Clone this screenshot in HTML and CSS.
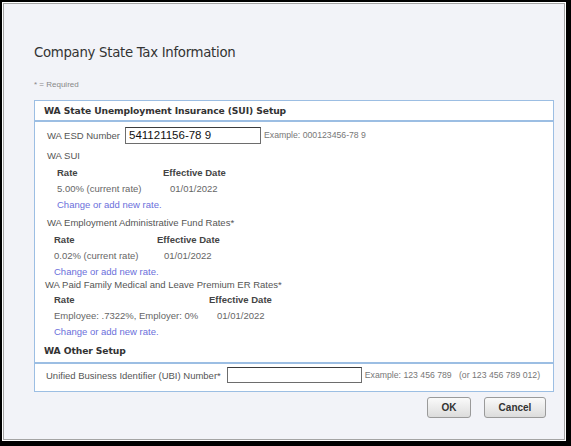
FILE: index.html
```html
<!DOCTYPE html>
<html lang="en">
<head>
  <meta charset="UTF-8">
  <title>Company State Tax Information</title>
  <link rel="stylesheet" href="styles.css">
</head>
<body>
  <div class="frame">
    <div class="dialog">
      <h2 class="title">Company State Tax Information</h2>
      <div class="req">* = Required</div>

      <div class="panel">
        <div class="panel-head">WA State Unemployment Insurance (SUI) Setup</div>
        <div class="panel-body">
          <div class="field-row">
            <label class="lbl">WA ESD Number</label>
            <input class="txt esd" type="text" value="541121156-78 9">
            <span class="example">Example: 000123456-78 9</span>
          </div>

          <div class="line">WA SUI</div>
          <div class="rates r1">
            <div class="rrow head"><span class="c1">Rate</span><span>Effective Date</span></div>
            <div class="rrow"><span class="c1 v">5.00% (current rate)</span><span class="v">01/01/2022</span></div>
            <div class="rrow"><a class="link" href="#">Change or add new rate.</a></div>
          </div>

          <div class="line">WA Employment Administrative Fund Rates*</div>
          <div class="rates r2">
            <div class="rrow head"><span class="c1">Rate</span><span>Effective Date</span></div>
            <div class="rrow"><span class="c1 v">0.02% (current rate)</span><span class="v">01/01/2022</span></div>
            <div class="rrow"><a class="link" href="#">Change or add new rate.</a></div>
          </div>

          <div class="line tight">WA Paid Family Medical and Leave Premium ER Rates*</div>
          <div class="rates r3">
            <div class="rrow head"><span class="c1">Rate</span><span>Effective Date</span></div>
            <div class="rrow"><span class="c1 v">Employee: .7322%, Employer: 0%</span><span class="v">01/01/2022</span></div>
            <div class="rrow last"><a class="link" href="#">Change or add new rate.</a></div>
          </div>
        </div>
        <div class="panel-head sub">WA Other Setup</div>
        <div class="field-row ubi">
          <label class="lbl">Unified Business Identifier (UBI) Number*</label>
          <input class="txt ubi-in" type="text" value="">
          <span class="example">Example: 123 456 789 &nbsp; (or 123 456 789 012)</span>
        </div>
      </div>

      <div class="actions">
        <button class="btn ok">OK</button>
        <button class="btn cancel">Cancel</button>
      </div>
    </div>
  </div>
</body>
</html>
```

FILE: styles.css
```css
html, body { margin: 0; padding: 0; }
body { width: 571px; height: 446px; background: #000; font-family: "Liberation Sans", Arial, sans-serif; font-size: 9.5px; color: #555; }
.frame { box-sizing: border-box; width: 571px; height: 446px; border-style: solid; border-color: #000; border-width: 2px 5px 5px 2px; }
.dialog { box-sizing: border-box; height: 100%; border: 1px solid #fff; box-shadow: inset 0 0 0 1px #a4a4a4; background: #f2f3f8; padding: 40px 11px 0 31px; }
.title { margin: 0; font-family: "DejaVu Sans", Verdana, sans-serif; font-weight: normal; font-size: 13.3px; line-height: 20px; color: #333; letter-spacing: -0.3px; }
.req { margin-top: 16px; line-height: 12px; font-size: 8px; color: #888; }
.panel { margin-top: 9px; border: 1px solid #9cbee3; background: #fff; }
.panel-head { font-family: "DejaVu Sans", Verdana, sans-serif; font-weight: bold; font-size: 9.2px; line-height: 19px; padding-left: 9px; color: #333; border-bottom: 2px solid #9cbee3; letter-spacing: -0.1px; }
.panel-head.sub { line-height: 22px; }
.panel-body { padding: 2px 0 1px 12px; }
.field-row { display: flex; align-items: center; height: 22px; }
.lbl { margin-right: 5px; }
.txt { box-sizing: border-box; height: 17px; border: 1px solid #6d6d6d; border-top-color: #3c3c3c; background: #fff; padding: 0 3px; font-family: "Liberation Sans", Arial, sans-serif; font-size: 11.5px; color: #111; }
.esd { width: 136px; }
.example { margin-left: 3px; font-size: 8.7px; color: #777; }
.line { line-height: 17px; margin-top: 1px; }
.line.tight { line-height: 14px; margin-top: -2px; margin-left: -2px; }
.rates { padding-left: 10px; }
.rates.r2, .rates.r3 { padding-left: 7px; }
.rrow { display: flex; line-height: 16px; }
.rrow.head { font-weight: bold; color: #444; line-height: 17px; }
.r3 .rrow.head { line-height: 16px; }
.r3 .rrow.last { line-height: 15px; }
.r1 .c1 { width: 106px; }
.r2 .c1 { width: 103px; }
.r3 .c1 { width: 155px; }
.rrow .v { color: #666; }
.r1 .rrow .v + .v { padding-left: 7px; }
.r2 .rrow .v + .v { padding-left: 7px; }
.r3 .rrow .v + .v { padding-left: 8px; }
.link { color: #6b6fdb; text-decoration: none; }
.field-row.ubi { height: 22px; padding: 0 0 5px 11px; }
.ubi-in { width: 135px; height: 16px; margin-left: 1px; }
.actions { display: flex; justify-content: flex-end; gap: 13px; margin-top: 5px; padding-right: 8px; }
.btn { height: 21px; border: 1px solid #9a9a9a; border-radius: 3px; background: linear-gradient(#fafafa, #dcdcdc); font-family: "Liberation Sans", Arial, sans-serif; font-weight: bold; font-size: 10px; color: #333; cursor: pointer; }
.btn.ok { width: 44px; }
.btn.cancel { width: 62px; }
```
